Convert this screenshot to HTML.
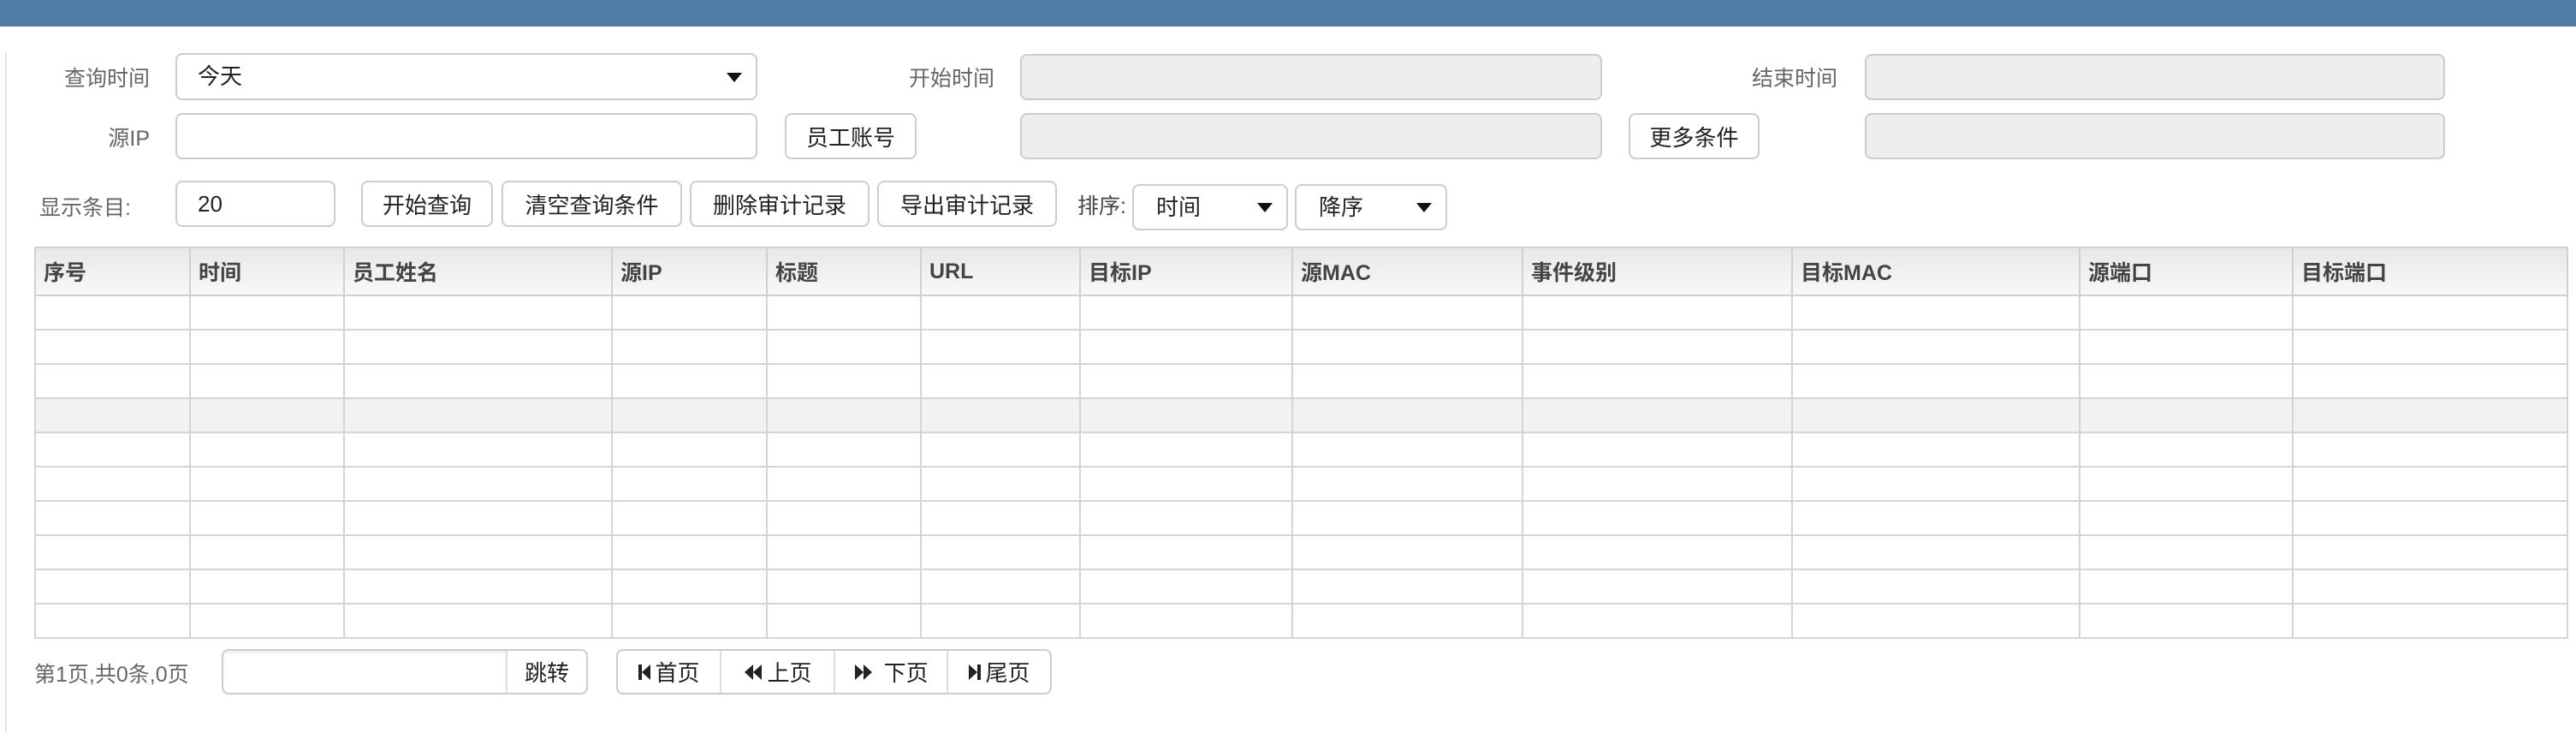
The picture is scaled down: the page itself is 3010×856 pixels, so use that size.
<!DOCTYPE html>
<html><head><meta charset="utf-8"><style>
*{box-sizing:border-box;margin:0;padding:0}
body{width:3010px;height:856px;background:#fff;position:relative;overflow:hidden;font-family:"Liberation Sans","Noto Sans CJK SC",sans-serif;color:#333}
.a{position:absolute}
.hdr{left:0;top:0;width:3010px;height:31px;background:#507ca6}
.vl{left:6px;top:62px;width:2px;height:794px;background:#e4e4e4}
.lbl{font-size:25px;color:#666;line-height:30px}
.r{text-align:right}
.in{border:2px solid #ccc;border-radius:8px;background:#fff;font-size:26px;line-height:50px;padding-left:24px;color:#222}
.dis{background:#eee}
.btn{border:2px solid #ccc;border-radius:8px;background:#fff;font-size:26px;color:#222;text-align:center;display:flex;align-items:center;justify-content:center}
.arr{position:absolute;right:16px;top:50%;margin-top:-5px;width:0;height:0;border-left:9px solid transparent;border-right:9px solid transparent;border-top:11px solid #111}
table{position:absolute;left:40px;top:288px;width:2959px;border-collapse:collapse;table-layout:fixed}
td,th{border:2px solid #d4d4d4;height:40px;padding:0}
th{height:56px;background:linear-gradient(#e8e8e8,#f8f8f8);text-align:left;padding-left:9px;font-size:25px;font-weight:bold;color:#444;border-color:#d0d0d0}
tr.g td{background:#f2f2f2}
.pg{display:flex;border:2px solid #ccc;border-radius:8px;overflow:hidden}
.pg div{border-right:2px solid #ddd;font-size:26px;display:flex;align-items:center;justify-content:center;color:#222;gap:4px}
.pg div:last-child{border-right:none}
</style></head><body>
<div class="a hdr"></div>
<div class="a vl"></div>

<div class="a lbl r" style="left:40px;top:77px;width:135px">查询时间</div>
<div class="a in" style="left:205px;top:62px;width:680px;height:55px">今天<span class="arr"></span></div>
<div class="a lbl r" style="left:1000px;top:77px;width:162px">开始时间</div>
<div class="a in dis" style="left:1192px;top:63px;width:680px;height:54px"></div>
<div class="a lbl r" style="left:1990px;top:77px;width:157px">结束时间</div>
<div class="a in dis" style="left:2179px;top:63px;width:678px;height:54px"></div>

<div class="a lbl r" style="left:40px;top:147px;width:135px">源IP</div>
<div class="a in" style="left:205px;top:132px;width:680px;height:54px"></div>
<div class="a btn" style="left:917px;top:132px;width:154px;height:54px">员工账号</div>
<div class="a in dis" style="left:1192px;top:132px;width:680px;height:54px"></div>
<div class="a btn" style="left:1903px;top:132px;width:153px;height:54px">更多条件</div>
<div class="a in dis" style="left:2179px;top:132px;width:678px;height:54px"></div>

<div class="a lbl" style="left:46px;top:228px">显示条目:</div>
<div class="a in" style="left:205px;top:211px;width:187px;height:54px">20</div>
<div class="a btn" style="left:422px;top:211px;width:154px;height:54px">开始查询</div>
<div class="a btn" style="left:586px;top:211px;width:211px;height:54px">清空查询条件</div>
<div class="a btn" style="left:806px;top:211px;width:210px;height:54px">删除审计记录</div>
<div class="a btn" style="left:1025px;top:211px;width:210px;height:54px">导出审计记录</div>
<div class="a lbl" style="left:1259px;top:226px;color:#444">排序:</div>
<div class="a in" style="left:1323px;top:215px;width:182px;height:54px;padding-left:26px">时间<span class="arr"></span></div>
<div class="a in" style="left:1513px;top:215px;width:178px;height:54px;padding-left:26px">降序<span class="arr"></span></div>

<table>
<colgroup><col style="width:181px"><col style="width:180px"><col style="width:313px"><col style="width:181px"><col style="width:180px"><col style="width:186px"><col style="width:248px"><col style="width:269px"><col style="width:315px"><col style="width:336px"><col style="width:249px"><col style="width:321px"></colgroup>
<tr><th>序号</th><th>时间</th><th>员工姓名</th><th>源IP</th><th>标题</th><th>URL</th><th>目标IP</th><th>源MAC</th><th>事件级别</th><th>目标MAC</th><th>源端口</th><th>目标端口</th></tr>
<tr><td></td><td></td><td></td><td></td><td></td><td></td><td></td><td></td><td></td><td></td><td></td><td></td></tr>
<tr><td></td><td></td><td></td><td></td><td></td><td></td><td></td><td></td><td></td><td></td><td></td><td></td></tr>
<tr><td></td><td></td><td></td><td></td><td></td><td></td><td></td><td></td><td></td><td></td><td></td><td></td></tr>
<tr class="g"><td></td><td></td><td></td><td></td><td></td><td></td><td></td><td></td><td></td><td></td><td></td><td></td></tr>
<tr><td></td><td></td><td></td><td></td><td></td><td></td><td></td><td></td><td></td><td></td><td></td><td></td></tr>
<tr><td></td><td></td><td></td><td></td><td></td><td></td><td></td><td></td><td></td><td></td><td></td><td></td></tr>
<tr><td></td><td></td><td></td><td></td><td></td><td></td><td></td><td></td><td></td><td></td><td></td><td></td></tr>
<tr><td></td><td></td><td></td><td></td><td></td><td></td><td></td><td></td><td></td><td></td><td></td><td></td></tr>
<tr><td></td><td></td><td></td><td></td><td></td><td></td><td></td><td></td><td></td><td></td><td></td><td></td></tr>
<tr><td></td><td></td><td></td><td></td><td></td><td></td><td></td><td></td><td></td><td></td><td></td><td></td></tr>
</table>

<div class="a lbl" style="left:40px;top:773px;color:#666">第1页,共0条,0页</div>
<div class="a" style="left:259px;top:758px;width:428px;height:53px;border:2px solid #ccc;border-radius:8px;display:flex;overflow:hidden">
<div style="width:332px;border-right:2px solid #ddd;box-shadow:inset 0 3px 3px #eee"></div>
<div style="flex:1;display:flex;align-items:center;justify-content:center;font-size:26px;color:#222">跳转</div></div>
<div class="a pg" style="left:720px;top:758px;width:509px;height:53px">
<div style="width:121px"><svg width="16" height="22" viewBox="0 0 16 22"><rect x="1" y="2" width="4" height="18" fill="#222"/><path d="M15 2V20L5 11Z" fill="#222"/></svg>首页</div>
<div style="width:133px"><svg width="24" height="22" viewBox="0 0 24 22"><path d="M12 2V20L2 11Z M22 2V20L12 11Z" fill="#222"/></svg>上页</div>
<div style="width:132px"><svg width="24" height="22" viewBox="0 0 24 22"><path d="M2 2V20L12 11Z M12 2V20L22 11Z" fill="#222"/></svg>&nbsp;下页</div>
<div style="flex:1"><svg width="16" height="22" viewBox="0 0 16 22"><path d="M1 2V20L11 11Z" fill="#222"/><rect x="11" y="2" width="4" height="18" fill="#222"/></svg>尾页</div>
</div>
</body></html>
